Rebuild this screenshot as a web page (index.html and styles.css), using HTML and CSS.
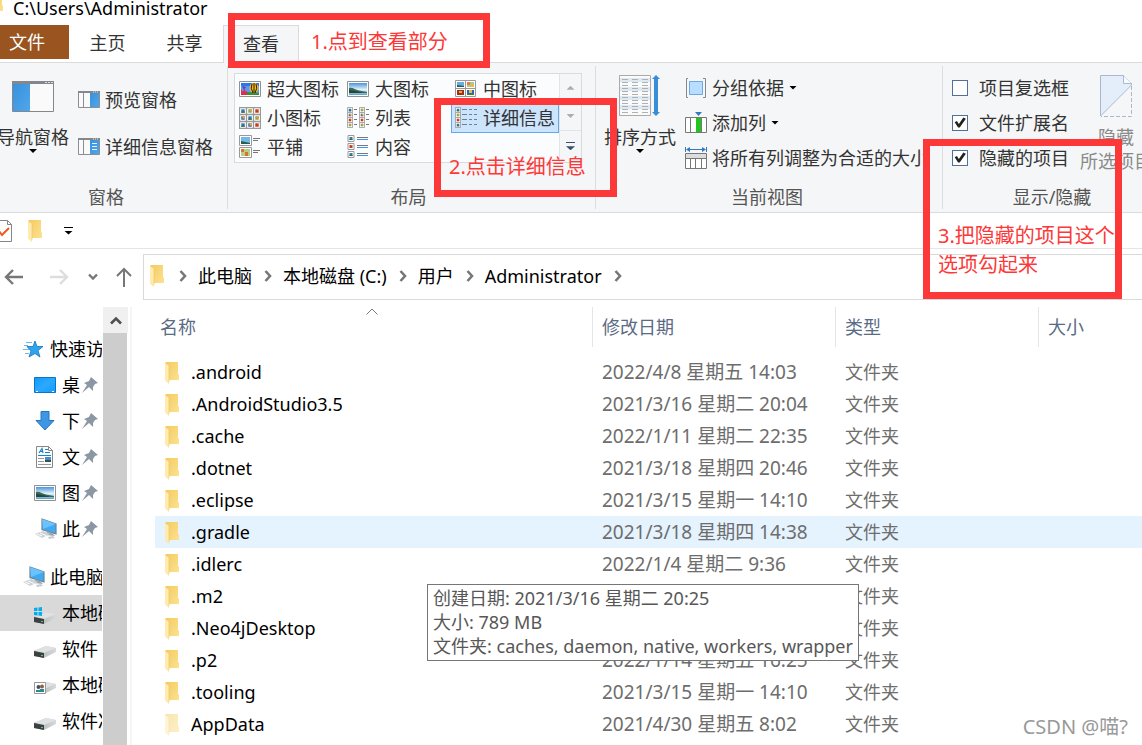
FILE: index.html
```html
<!DOCTYPE html>
<html lang="zh-CN">
<head>
<meta charset="utf-8">
<title>C:\Users\Administrator</title>
<link rel="stylesheet" href="styles.css">
</head>
<body>
<svg class="defs" aria-hidden="true">
  <defs>
    <linearGradient id="gFold" x1="0" x2="1" y1="0" y2="1"><stop offset="0" stop-color="#f2cb60"/><stop offset="1" stop-color="#ffe394"/></linearGradient>
    <linearGradient id="gSky" x1="0" x2="0" y1="0" y2="1"><stop offset="0" stop-color="#4a94dc"/><stop offset="0.55" stop-color="#e4f3fb"/><stop offset="1" stop-color="#5aa0c8"/></linearGradient>
    <linearGradient id="gPane" x1="0" x2="1" y1="0" y2="1"><stop offset="0" stop-color="#3691dd"/><stop offset="1" stop-color="#52a6ea"/></linearGradient>
    <linearGradient id="gDesk" x1="0" x2="1" y1="0" y2="1"><stop offset="0" stop-color="#109af8"/><stop offset="0.5" stop-color="#2ba9ff"/><stop offset="1" stop-color="#149cfa"/></linearGradient>
    <linearGradient id="gDrive" x1="0" x2="1"><stop offset="0" stop-color="#a9acad"/><stop offset="1" stop-color="#d8dadc"/></linearGradient>
  </defs>
  <symbol id="folder" viewBox="0 0 14 22"><path d="M1 0H13V12L14 13V18H4V22L0 18V1Z" fill="url(#gFold)"/><path d="M0 1L4 4V20.500L4 22L0 18Z" fill="#ffeab0"/><path d="M4 4V20" stroke="#e9c25a" stroke-width="0.600"/></symbol>
  <symbol id="picture" viewBox="0 0 22 16"><path d="M.5.5H21.500V15.500H.5Z" fill="#fff" stroke="#909090"/><path d="M2 2H20V14H2Z" fill="url(#gSky)"/><path d="M2 7C6 6 8 9 12 9.500L20 11V12H2Z" fill="#3b6a55"/><path d="M2 9L9 10L16 12H2Z" fill="#24493b"/></symbol>
  <symbol id="balloon" viewBox="0 0 22 16"><path d="M.5.5H21.500V15.500H.5Z" fill="#fff" stroke="#909090"/><path d="M2 2H20V14H2Z" fill="#5b9af0"/><path d="M2 2H20V5H2Z" fill="#2d78e6"/><path d="M2 12L8 11L20 12V14H2Z" fill="#39902e"/><path d="M2 8L4 11L5 8L7 11L8 9V14H2Z" fill="#e12d47"/><path d="M3 5L7 6L5 9Z" fill="#713ab5"/><ellipse cx="15" cy="7" rx="4.500" ry="5" fill="#f6bf1b"/><path d="M13 3Q11 7 14 12M17 3Q19 7 16 12M15 2V12" stroke="#251b12" fill="none"/></symbol>
  <symbol id="thumb" viewBox="0 0 7 7"><path d="M.5.5H6.500V6.500H.5Z" fill="#fff" stroke="#999"/><path d="M2 2H5V5H2Z" fill="#337cb1"/><path d="M2 4H5V5H2Z" fill="#2d6d45"/></symbol>
  <symbol id="thumbR" viewBox="0 0 7 7"><path d="M.5.5H6.500V6.500H.5Z" fill="#fff" stroke="#999"/><path d="M2 2H5V5H2Z" fill="#c33a1e"/><path d="M4 2H5V3H4Z" fill="#f19a3d"/></symbol>
  <symbol id="thumbG" viewBox="0 0 7 7"><path d="M.5.5H6.500V6.500H.5Z" fill="#fff" stroke="#999"/><path d="M2 2H5V5H2Z" fill="#79a852"/><path d="M3 2H5V4H3Z" fill="#e49b42"/></symbol>
  <symbol id="thumbY" viewBox="0 0 7 7"><path d="M.5.5H6.500V6.500H.5Z" fill="#fff" stroke="#999"/><path d="M2 2H5V5H2Z" fill="#3854b8"/><path d="M3 2H5V4H3Z" fill="#efb525"/></symbol>
  <symbol id="small" viewBox="0 0 22 22"><use href="#thumb" width="8" height="8"/><use href="#thumbG" x="7" width="8" height="8"/><use href="#thumbR" x="14" width="8" height="8"/><use href="#thumbY" y="7" width="8" height="8"/><use href="#thumb" x="7" y="7" width="8" height="8"/><use href="#thumbG" x="14" y="7" width="8" height="8"/><use href="#thumb" y="14" width="8" height="8"/><use href="#thumbY" x="7" y="14" width="8" height="8"/><use href="#thumbR" x="14" y="14" width="8" height="8"/></symbol>
  <symbol id="medium" viewBox="0 0 22 18"><path d="M.5.5H20.500V16.500H.5ZM10.500.5V16.500M.5 8.500H20.500" fill="#fff" stroke="#999"/><path d="M2 2H9V7H2Z" fill="#67ace3"/><path d="M2 5L9 6V7H2Z" fill="#27604a"/><path d="M12 2H19V7H12Z" fill="#a9c993"/><path d="M12 2H15V5H12Z" fill="#e87b43"/><path d="M16 4H19V7H16Z" fill="#ecbb40"/><path d="M2 10H9V15H2Z" fill="#9e301b"/><path d="M4 11H7V13H4Z" fill="#f4a42b"/><path d="M12 10H19V15H12Z" fill="#2f66bd"/><path d="M14 10H17V13H14Z" fill="#efbf33"/><path d="M12 14H19V15H12Z" fill="#3c852a"/></symbol>
  <symbol id="list" viewBox="0 0 22 22"><use href="#thumb" width="6" height="6"/><use href="#thumbY" y="5" width="6" height="6"/><use href="#thumbR" y="10" width="6" height="6"/><use href="#thumbG" y="15" width="6" height="6"/><use href="#thumbG" x="12" width="6" height="6"/><use href="#thumbY" x="12" y="5" width="6" height="6"/><use href="#thumbR" x="12" y="10" width="6" height="6"/><use href="#thumbG" x="12" y="15" width="6" height="6"/><path d="M7 2.500H10M7 7.500H10M7 12.500H10M7 17.500H10M19 2.500H22M19 7.500H22M19 12.500H22M19 17.500H22" stroke="#777"/></symbol>
  <symbol id="details" viewBox="0 0 22 22"><use href="#thumb" width="6" height="6"/><use href="#thumbG" y="5" width="6" height="6"/><use href="#thumbR" y="10" width="6" height="6"/><use href="#thumb" y="15" width="6" height="6"/><path d="M7 2.500H12M14 2.500H17M19 2.500H22M7 7.500H12M14 7.500H17M19 7.500H22M7 12.500H12M14 12.500H17M19 12.500H22M7 17.500H12M14 17.500H17M19 17.500H22" stroke="#708092"/></symbol>
  <symbol id="tiles" viewBox="0 0 22 24"><path d="M.5.5H12.500V10.500H.5ZM.5 12.500H12.500V22.500H.5Z" fill="#fff" stroke="#999"/><path d="M2 2H11V9H2Z" fill="#75b7e9"/><path d="M2 6L11 8V9H2Z" fill="#27604a"/><path d="M2 14H11V21H2Z" fill="#b4cf86"/><path d="M2 14H5V17H2ZM6 17H9V21H6Z" fill="#e06d32"/><path d="M14 3.500H21M14 5.500H19M14 15.500H21M14 17.500H19" stroke="#777"/></symbol>
  <symbol id="content" viewBox="0 0 22 24"><use href="#thumb" width="8" height="7"/><use href="#thumbR" y="8" width="8" height="7"/><use href="#thumb" y="16" width="8" height="7"/><path d="M10 2.500H21M10 10.500H21M10 18.500H21" stroke="#777"/><path d="M10 4.500H21M10 12.500H21M10 20.500H21" stroke="#4a90e2"/></symbol>
  <symbol id="pc" viewBox="0 0 24 22"><path d="M8 1L22 6V16L8 11.500Z" fill="#3eaaf5" stroke="#73818a" stroke-width="1.200"/><path d="M8 1L22 6L9 11Z" fill="#68c3ff"/><path d="M13 13L18 15L21 18L12 17Z" fill="#9aa5ab"/><path d="M1 16L9 13L16 16L8 20Z" fill="#cbd1d5"/><path d="M3 16L8 18M6 15L12 17.500" stroke="#fff"/><path d="M14 19L19 18L21 20L15 21Z" fill="#c7cdd1"/></symbol>
  <symbol id="drive" viewBox="0 0 22 14"><path d="M0 6L12 1L22 3V7L10 13L0 11Z" fill="url(#gDrive)"/><path d="M0 6L12 1L22 3L10 8Z" fill="#dfe1e3"/><path d="M0 6L10 8V13L0 11Z" fill="#3d4143"/><path d="M7 10.500H9" stroke="#3bd84a"/></symbol>
  <symbol id="pin" viewBox="0 0 16 16"><path d="M9 0L16 6L13 7L11 10L11 14L7 10L0 16L5 8L2 6L7 4Z" fill="#8b98a3"/></symbol>
  <symbol id="chev" viewBox="0 0 8 12"><path d="M1.500 1L6 6L1.500 11" fill="none" stroke="#777" stroke-width="2.600"/></symbol>
</svg>

<header class="titlebar"><svg class="title-ico"><use href="#folder"/></svg><span>C:\Users\Administrator</span></header>

<nav class="tabs">
  <button class="tab file">文件</button>
  <button class="tab">主页</button>
  <button class="tab">共享</button>
  <button class="tab active">查看</button>
</nav>

<section class="ribbon">
  <div class="group panes">
    <div class="group-body">
      <button class="big">
        <span class="big-ico"><svg width="42" height="32" viewBox="0 0 42 32"><path d="M.5.5H41.500V30.500H.5Z" fill="#fafafa" stroke="#84888c"/><path d="M0 0H42V3H0Z" fill="#84888c"/><path d="M1 3H18V30H1Z" fill="url(#gPane)"/><path d="M33 1.500H35M36 1.500H38M39 1.500H41" stroke="#ddd"/></svg></span>
        <span>导航窗格</span><i class="caret"></i>
      </button>
      <div class="stack wide">
        <button class="cmd"><svg width="22" height="18" viewBox="0 0 22 18"><path d="M.5.5H21.500V16.500H.5ZM5.500 2V16" fill="#fafafa" stroke="#8a8e92"/><path d="M0 0H22V2H0Z" fill="#84888c"/><path d="M12 2H21V16H12Z" fill="url(#gPane)"/><path d="M15 1H20" stroke="#ddd" stroke-dasharray="1"/></svg>预览窗格</button>
        <button class="cmd"><svg width="22" height="18" viewBox="0 0 22 18"><path d="M.5.5H21.500V16.500H.5ZM5.500 2V16" fill="#fafafa" stroke="#8a8e92"/><path d="M0 0H22V2H0Z" fill="#84888c"/><path d="M12 2H21V16H12Z" fill="url(#gPane)"/><path d="M14 5.500H19M14 8.500H19M14 11.500H19" stroke="#e7f3fc"/><path d="M15 1H20" stroke="#ddd" stroke-dasharray="1"/></svg>详细信息窗格</button>
      </div>
    </div>
    <div class="group-name">窗格</div>
  </div>

  <div class="group layout">
    <div class="group-body">
      <div class="gallery">
        <div class="views">
          <button class="view"><svg height="16"><use href="#balloon"/></svg>超大图标</button>
          <button class="view"><svg height="16"><use href="#picture"/></svg>大图标</button>
          <button class="view"><svg height="18"><use href="#medium"/></svg>中图标</button>
          <button class="view"><svg height="22"><use href="#small"/></svg>小图标</button>
          <button class="view"><svg height="22"><use href="#list"/></svg>列表</button>
          <button class="view selected"><svg height="22"><use href="#details"/></svg>详细信息</button>
          <button class="view"><svg height="24"><use href="#tiles"/></svg>平铺</button>
          <button class="view"><svg height="24"><use href="#content"/></svg>内容</button>
        </div>
        <div class="gallery-nav">
          <button aria-label="向上"><i class="caret up"></i></button>
          <button aria-label="向下"><i class="caret dim"></i></button>
          <button aria-label="更多"><i class="more slate"></i></button>
        </div>
      </div>
    </div>
    <div class="group-name">布局</div>
  </div>

  <div class="group current">
    <div class="group-body">
      <button class="big sort">
        <span class="big-ico"><svg width="42" height="42" viewBox="0 0 42 42"><path d="M.5.5H31.500V40.500H.5Z" fill="#fafafa" stroke="#aaa"/><path d="M1 3H31V7H1ZM1 12H31V16H1ZM1 21H31V25H1ZM1 30H31V34H1Z" fill="#dcebf3"/><path d="M3 4.500H29M3 7.500H29M3 10.500H29M3 13.500H29M3 16.500H29M3 19.500H29M3 22.500H29M3 25.500H29M3 28.500H29M3 31.500H29M3 34.500H29M3 37.500H29" stroke="#b0b0b0" stroke-dasharray="6 4"/><path d="M37 0L41 4H39V37H41L37 41L33 37H35V4H33Z" fill="#398edb"/></svg></span>
        <span>排序方式</span><i class="caret"></i>
      </button>
      <div class="stack">
        <button class="cmd"><svg width="22" height="22" viewBox="0 0 22 22"><path d="M3 1.500H1.500V20.500H3M18 1.500H20.500V20.500H18" fill="none" stroke="#888"/><path d="M4.500 4.500H17.500V17.500H4.500Z" fill="#b9ddff" stroke="#6aa9e2"/></svg>分组依据<i class="caret"></i></button>
        <button class="cmd"><svg width="22" height="22" viewBox="0 0 22 22"><path d="M.5 5.500H21.500V20.500H.5ZM5.500 6V20M11.500 6V20M16.500 6V20" fill="#fff" stroke="#777"/><path d="M11 6H16V20H11Z" fill="#22c51e"/><path d="M10 0H17L13.500 4Z" fill="#3479c0"/></svg>添加列<i class="caret"></i></button>
        <button class="cmd"><svg width="22" height="22" viewBox="0 0 22 22"><path d="M.5 6.500H21.500V21.500H.5ZM5.500 11V21M10.500 11V21M16.500 11V21" fill="#fff" stroke="#777"/><path d="M1 7H21V11H1Z" fill="#ddd"/><path d="M1 11.500H21" stroke="#777"/><path d="M.5 0V5M21.500 0V5M3 2.500H19" stroke="#3479c0"/><path d="M1 2.500L5 0V5ZM21 2.500L17 0V5Z" fill="#3479c0"/></svg>将所有列调整为合适的大小</button>
      </div>
    </div>
    <div class="group-name">当前视图</div>
  </div>

  <div class="group show">
    <div class="group-body">
      <div class="stack checks">
        <label class="check"><input type="checkbox">项目复选框</label>
        <label class="check"><input type="checkbox" checked>文件扩展名</label>
        <label class="check"><input type="checkbox" checked>隐藏的项目</label>
      </div>
      <button class="big hide" disabled>
        <span class="big-ico"><svg width="32" height="42" viewBox="0 0 32 42"><path d="M.5 41V.5H23.500L31.500 8.500V10Z" fill="#e4eefb" stroke="#a9b8cd"/><path d="M23.500.5V8.500H31.500" fill="#f7faff" stroke="#a9b8cd"/><path d="M31.500 11V41.500H1" fill="none" stroke="#a9b8cd" stroke-dasharray="4 2"/></svg></span>
        <span>隐藏</span><span>所选项目</span>
      </button>
    </div>
    <div class="group-name">显示/隐藏</div>
  </div>
</section>

<div class="quick">
  <svg width="12" height="22" viewBox="0 0 12 22"><path d="M-8 .5H7.500L11.500 4.500V21.500H-8Z" fill="#fff" stroke="#858585"/><path d="M7.500.5V4.500H11.500" fill="none" stroke="#858585"/><path d="M-1 11L2 15L9 8" fill="none" stroke="#f05a1a" stroke-width="2"/></svg>
  <svg class="folder-ico"><use href="#folder"/></svg>
  <button class="quick-more" aria-label="自定义快速访问工具栏"><i class="more"></i></button>
</div>

<div class="address">
  <div class="arrows">
    <button aria-label="后退"><svg width="20" height="16" viewBox="0 0 20 16"><path d="M19 8H2M9 1L2 8L9 15" fill="none" stroke="#777" stroke-width="2.400"/></svg></button>
    <button aria-label="前进"><svg width="20" height="16" viewBox="0 0 20 16"><path d="M1 8H18M11 1L18 8L11 15" fill="none" stroke="#ddd" stroke-width="2.400"/></svg></button>
    <button aria-label="最近"><svg width="10" height="8" viewBox="0 0 10 8"><path d="M1 1.500L5 5.500L9 1.500" fill="none" stroke="#777" stroke-width="2.400"/></svg></button>
    <button aria-label="上移"><svg width="16" height="20" viewBox="0 0 16 20"><path d="M8 20V2M1 9L8 2L15 9" fill="none" stroke="#777" stroke-width="2"/></svg></button>
  </div>
  <nav class="crumbs">
    <svg class="folder-ico"><use href="#folder"/></svg>
    <svg class="chev"><use href="#chev"/></svg><a href="#">此电脑</a>
    <svg class="chev"><use href="#chev"/></svg><a href="#">本地磁盘 (C:)</a>
    <svg class="chev"><use href="#chev"/></svg><a href="#">用户</a>
    <svg class="chev"><use href="#chev"/></svg><a href="#">Administrator</a>
    <svg class="chev"><use href="#chev"/></svg>
  </nav>
</div>

<main class="main">
  <aside class="tree">
    <a class="node root" href="#"><svg width="22" height="20" viewBox="0 0 22 20"><path d="M13 2L15 7.500H21L16 11.500L18 18L13 14.500L7 18L9 12L5 7.500H11Z" fill="#2fa4ee" stroke="#1674b8" stroke-width=".8"/><path d="M4 3.500H10M2 6.500H6M1 10.500H7M3 14.500H7" stroke="#6bb9ef"/></svg>快速访问</a>
    <a class="node" href="#"><svg width="22" height="16" viewBox="0 0 22 16"><path d="M.5.5H21.500V15.500H.5Z" fill="url(#gDesk)" stroke="#0d73c4"/><path d="M2 14.500H4M18 14.500H20" stroke="#fff"/></svg>桌<svg class="pin"><use href="#pin"/></svg></a>
    <a class="node" href="#"><svg width="22" height="20" viewBox="0 0 22 20"><path d="M7 0.500H15V9.500H20L11 19L2 9.500H7Z" fill="#3f96e4" stroke="#2676c0"/></svg>下<svg class="pin"><use href="#pin"/></svg></a>
    <a class="node" href="#"><svg width="22" height="22" viewBox="0 0 22 22"><path d="M2.500.5H14.500L18.500 4.500V21.500H2.500Z" fill="#fff" stroke="#888"/><path d="M14.500.5V4.500H18.500" fill="none" stroke="#888"/><path d="M5 7L8 2.500L9 7M6 5.500H9M11 3.500H14M11 6.500H16M4 9.500H17" stroke="#1684c9" fill="none" stroke-width="1.200"/><path d="M4 12.500H10M4 15.500H10M4 18.500H17" stroke="#999"/><path d="M11 11H17V16H11Z" fill="#4b8aca"/><path d="M11 14H17V16H11Z" fill="#2d564c"/></svg>文<svg class="pin"><use href="#pin"/></svg></a>
    <a class="node" href="#"><svg width="22" height="16"><use href="#picture"/></svg>图<svg class="pin"><use href="#pin"/></svg></a>
    <a class="node" href="#"><svg width="24" height="22"><use href="#pc"/></svg>此<svg class="pin"><use href="#pin"/></svg></a>
    <a class="node root section" href="#"><svg width="24" height="22"><use href="#pc"/></svg>此电脑</a>
    <a class="node current-node" href="#"><svg width="22" height="18" viewBox="0 0 22 18"><use href="#drive" y="4" width="22" height="14"/><path d="M0 1L3.500.500V4H0ZM4.500.400L8 0V4H4.500ZM0 5H3.500V8.500L0 8ZM4.500 5H8V9L4.500 8.600Z" fill="#00adef"/></svg>本地磁盘</a>
    <a class="node low" href="#"><svg width="22" height="14"><use href="#drive"/></svg>软件</a>
    <a class="node low" href="#"><svg width="22" height="14" viewBox="0 0 22 14"><use href="#drive" width="22" height="14"/><path d="M.5 1.500H11.500V12.500H.5Z" fill="#fff" stroke="#999"/><path d="M2 9H6V11H2ZM6 8H10V11H6Z" fill="#2a8a93"/><circle cx="4.500" cy="6" r="2" fill="#45505a"/><circle cx="8" cy="5.500" r="2" fill="#8c6146"/></svg>本地磁盘</a>
    <a class="node low" href="#"><svg width="22" height="14"><use href="#drive"/></svg>软件冯</a>
  </aside>
  <div class="scrollbar"><button aria-label="向上滚动"><svg width="12" height="9" viewBox="0 0 12 9"><path d="M1 7.500L6 2.500L11 7.500" fill="none" stroke="#505050" stroke-width="2.600"/></svg></button><div class="thumb"></div></div>
  <div class="list">
    <table class="files">
      <colgroup><col class="c-name"><col class="c-date"><col class="c-type"><col></colgroup>
      <thead><tr>
        <th><span>名称</span><svg class="sort-mark" viewBox="0 0 12 7"><path d="M.5 6.500L6 1L11.500 6.500" fill="none" stroke="#777"/></svg></th>
        <th><span>修改日期</span></th><th><span>类型</span></th><th><span>大小</span></th>
      </tr></thead>
      <tbody>
        <tr><td><svg><use href="#folder"/></svg>.android</td><td>2022/4/8 星期五 14:03</td><td>文件夹</td><td></td></tr>
        <tr><td><svg><use href="#folder"/></svg>.AndroidStudio3.5</td><td>2021/3/16 星期二 20:04</td><td>文件夹</td><td></td></tr>
        <tr><td><svg><use href="#folder"/></svg>.cache</td><td>2022/1/11 星期二 22:35</td><td>文件夹</td><td></td></tr>
        <tr><td><svg><use href="#folder"/></svg>.dotnet</td><td>2021/3/18 星期四 20:46</td><td>文件夹</td><td></td></tr>
        <tr><td><svg><use href="#folder"/></svg>.eclipse</td><td>2021/3/15 星期一 14:10</td><td>文件夹</td><td></td></tr>
        <tr class="hover"><td><svg><use href="#folder"/></svg>.gradle</td><td>2021/3/18 星期四 14:38</td><td>文件夹</td><td></td></tr>
        <tr><td><svg><use href="#folder"/></svg>.idlerc</td><td>2022/1/4 星期二 9:36</td><td>文件夹</td><td></td></tr>
        <tr><td><svg><use href="#folder"/></svg>.m2</td><td></td><td>文件夹</td><td></td></tr>
        <tr><td><svg><use href="#folder"/></svg>.Neo4jDesktop</td><td></td><td>文件夹</td><td></td></tr>
        <tr><td><svg><use href="#folder"/></svg>.p2</td><td>2022/1/14 星期五 16:25</td><td>文件夹</td><td></td></tr>
        <tr><td><svg><use href="#folder"/></svg>.tooling</td><td>2021/3/15 星期一 14:10</td><td>文件夹</td><td></td></tr>
        <tr class="hidden-file"><td><svg><use href="#folder"/></svg>AppData</td><td>2021/4/30 星期五 8:02</td><td>文件夹</td><td></td></tr>
      </tbody>
    </table>
  </div>
</main>

<div class="tooltip" role="tooltip">创建日期: 2021/3/16 星期二 20:25<br>大小: 789 MB<br>文件夹: caches, daemon, native, workers, wrapper</div>
<div class="mark mark-1">1.点到查看部分</div>
<div class="mark mark-2">2.点击详细信息</div>
<div class="mark mark-3">3.把隐藏的项目这个<br>选项勾起来</div>
<div class="watermark">CSDN @喵?</div>
</body>
</html>
```
FILE: styles.css
```css
* { box-sizing: border-box; }
body {
  margin: 0;
  height: 100vh;
  display: flex;
  flex-direction: column;
  position: relative;
  overflow: hidden;
  background: #fff;
  color: #000;
  font: 18px/24px "Noto Sans", "Noto Sans CJK SC", sans-serif;
  white-space: nowrap;
}
button { margin: 0; padding: 0; border: 0; background: none; color: inherit; font: inherit; }
a { color: inherit; text-decoration: none; }
svg { display: block; flex: none; }
.defs { position: absolute; width: 0; height: 0; }
.folder-ico { width: 14px; height: 22px; }

.titlebar { flex: none; display: flex; gap: 10px; height: 25px; line-height: 16px; }
.title-ico { width: 14px; height: 22px; margin: -7px 0 0 -11px; }

.tabs { flex: none; display: flex; height: 38px; border-bottom: 1px solid #dadbdc; color: #333; }
.tab { width: 77px; height: 36px; }
.tab.file { width: 69px; height: 34px; background: #9a5420; color: #fff; padding-right: 15px; }
.tab.active { width: 76px; height: 38px; padding-bottom: 2px; background: #f5f6f7; border: 1px solid #dadbdc; border-bottom: 0; }

.ribbon { flex: none; display: flex; overflow: hidden; padding: 3px 0; background: #f5f6f7; border-bottom: 1px solid #dadbdc; color: #333; }
.group { flex: none; display: flex; flex-direction: column; border-right: 1px solid #dcdddf; }
.group-body { display: flex; height: 119px; }
.group-name { text-align: center; color: #555; }
.panes { width: 243px; margin-left: -15px; padding-left: 12px; }
.panes .group-name { margin-left: -12px; }
.layout { width: 368px; padding: 0 12px 0 6px; }
.current { width: 347px; padding: 0 4px 0 8px; }
.current .group-name { margin-left: -8px; }
.show { width: 218px; padding-left: 9px; border-right: 0; }
.show .group-name { margin-left: -9px; }

.big { display: flex; flex-direction: column; align-items: center; width: 72px; padding-top: 7px; }
.big-ico { display: flex; align-items: center; justify-content: center; height: 46px; margin-bottom: 6px; }
.panes .big-ico { height: 48px; margin-bottom: 4px; }
.sort { margin-right: 9px; }
.hide { margin-left: 11px; color: #8a8a8a; }
.stack { display: flex; flex-direction: column; padding-top: 4px; }
.cmd { display: flex; align-items: center; gap: 5px; height: 35px; text-align: left; }
.wide { padding: 10px 0 0 9px; }
.wide .cmd { height: 47px; }

.caret { width: 8px; height: 4px; background: #000; clip-path: polygon(0 0, 100% 0, 50% 100%); }
.caret.dim, .caret.up { background: #a9aeb4; }
.caret.up { clip-path: polygon(50% 0, 100% 100%, 0 100%); }
.more { display: block; width: 9px; height: 8px; border-top: 1px solid; }
.more::after { content: ""; display: block; margin-top: 3px; height: 4px; background: currentColor; clip-path: polygon(0 0, 100% 0, 50% 100%); }
.slate { color: #3b506b; }

.gallery { display: flex; height: 90px; width: 348px; margin-top: 7px; border: 1px solid #dadbdc; background: #fbfcfd; }
.views { flex: 1; display: grid; grid-template-columns: repeat(3, 108px); grid-auto-rows: 29px; }
.view { display: flex; align-items: center; gap: 6px; height: 29px; padding: 0 4px; }
.view svg { width: 22px; }
.view.selected { background: #cce4fc; border: 1px solid #66a7e8; padding: 0 3px; height: 30px; }
.gallery-nav { width: 22px; display: grid; border-left: 1px solid #e3e4e6; }
.gallery-nav button { display: grid; place-items: center; background: #f5f6f7; border-bottom: 1px solid #e3e4e6; }
.gallery-nav button:last-child { border-bottom: 0; }

.check { display: flex; align-items: center; gap: 11px; height: 35px; }
.check input { appearance: none; width: 16px; height: 16px; margin: 0; border: 1px solid #53709b; background: #fff; }
.check input:checked::before { content: ""; display: block; width: 14px; height: 14px; background: #222; clip-path: polygon(12% 48%, 28% 40%, 42% 60%, 74% 14%, 92% 24%, 48% 86%, 36% 86%); }

.quick { flex: none; display: flex; align-items: center; gap: 16px; height: 36px; border-bottom: 1px solid #e5e5e5; }
.quick-more { padding: 4px; margin-left: 2px; }

.address { flex: none; display: flex; height: 51px; padding-top: 5px; }
.arrows { display: flex; align-items: center; width: 143px; padding-left: 4px; gap: 25px; }
.arrows button:nth-child(3) { margin-left: -6px; }
.arrows button:nth-child(4) { margin-left: -7px; }
.crumbs { flex: 1; display: flex; align-items: center; padding: 0 6px 2px; border: 1px solid #d9d9d9; border-right: 0; }
.crumbs .folder-ico { margin-right: 3px; }
.chev { width: 8px; height: 12px; margin: 0 11px 0 12px; }

.main { flex: 1; min-height: 0; display: flex; overflow: hidden; }
.tree { flex: none; width: 102px; padding-top: 31px; overflow: hidden; }
.node { display: flex; align-items: center; height: 36px; padding-left: 34px; overflow: hidden; }
.node svg:first-child { margin-right: 6px; }
.node svg[width="24"] { margin-right: 4px; }
.node.root { padding-left: 22px; }
.node.section { margin-top: 12px; }
.node .pin { width: 16px; height: 16px; margin-left: 2px; }
.node.low svg, .current-node svg { margin-top: 6px; }
.current-node { background: #d9d9d9; }
.scrollbar { flex: none; width: 27px; margin-left: 1px; padding-top: 7px; display: flex; flex-direction: column; }
.scrollbar button { width: 25px; height: 26px; display: grid; place-items: center; background: #f0f0f0; }
.thumb { width: 24px; flex: 1; background: #cdcdcd; }

.list { flex: 1; min-width: 0; margin-top: 7px; padding-left: 23px; border-left: 2px solid #f5f5f5; }
.files { width: 100%; table-layout: fixed; border-collapse: collapse; color: #6d6d6d; }
.c-name { width: 437px; }
.c-date { width: 243px; }
.c-type { width: 203px; }
.files th { position: relative; padding: 0 0 9px; font-weight: 400; text-align: left; color: #5a6b84; }
.files th span { display: block; height: 40px; line-height: 40px; padding-left: 9px; border-left: 1px solid #e5e5e5; }
.files th:first-child span { border-left: 0; padding-left: 5px; }
.sort-mark { position: absolute; left: 211px; top: 1px; width: 12px; height: 7px; }
.files td { height: 32px; padding: 0 0 0 10px; }
.files td:first-child { display: flex; align-items: center; gap: 12px; color: #000; }
.files td:nth-child(2) { font-size: 19px; }
.files td svg { width: 14px; height: 22px; margin-top: 2px; }
.files .hover { background: #e5f3ff; }
.files .hidden-file svg { opacity: .5; }

.tooltip { position: absolute; left: 427px; top: 584px; padding: 1px 5px 2px; border: 1px solid #767676; background: #fff; color: #575757; }
.mark { position: absolute; border: 7px solid #fd3838; color: #fd3838; font-size: 20px; line-height: 29px; }
.mark-1 { left: 228px; top: 13px; width: 262px; height: 55px; padding: 7px 0 0 76px; }
.mark-2 { left: 434px; top: 98px; width: 183px; height: 99px; padding: 47px 0 0 8px; }
.mark-3 { left: 923px; top: 139px; width: 199px; height: 160px; padding: 75px 0 0 8px; }
.watermark { position: absolute; right: 14px; bottom: 6px; color: #999; font-size: 20px; }
```
